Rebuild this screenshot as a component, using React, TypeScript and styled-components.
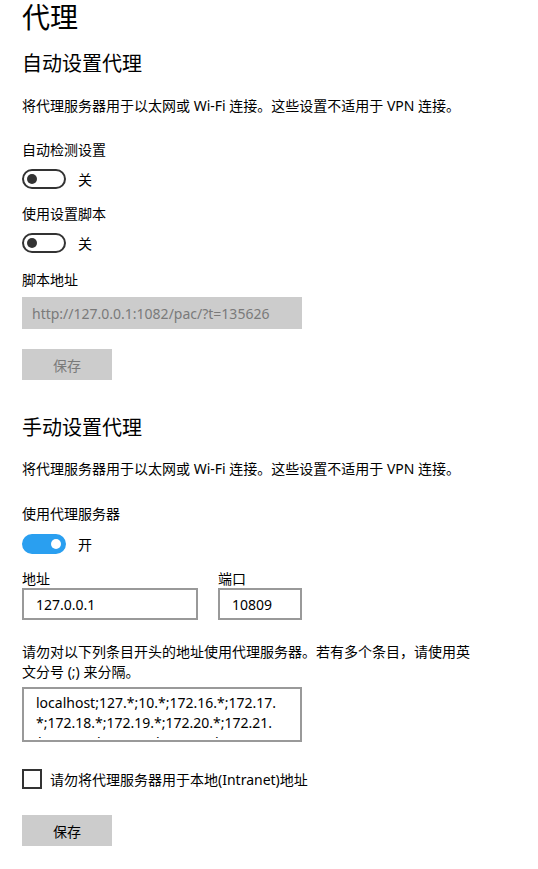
import React from 'react';
import styled, { createGlobalStyle } from 'styled-components';

const GlobalStyle = createGlobalStyle`
  html, body {
    margin: 0;
    padding: 0;
    background: #ffffff;
  }
  body {
    font-family: "Noto Sans", "Noto Sans CJK SC", sans-serif;
    color: #000000;
    font-size: 14px;
  }
`;

const Page = styled.div`
  width: 538px;
  height: 869px;
  box-sizing: border-box;
  padding: 0 22px;
  overflow: hidden;
`;

const Title = styled.h1`
  margin: 0;
  font-size: 28px;
  line-height: 34px;
  font-weight: 400;
`;

const SectionTitle = styled.h2<{ $mt: number }>`
  margin: ${(p) => p.$mt}px 0 0;
  font-size: 20px;
  line-height: 28px;
  font-weight: 400;
`;

const Text = styled.p<{ $mt: number; $maxWidth?: number }>`
  margin: ${(p) => p.$mt}px 0 0;
  font-size: 14px;
  line-height: 20px;
  max-width: ${(p) => (p.$maxWidth ? `${p.$maxWidth}px` : 'none')};
`;

const ToggleRow = styled.div<{ $mt: number }>`
  margin-top: ${(p) => p.$mt}px;
  display: flex;
  align-items: center;
  gap: 12px;
  height: 20px;
  font-size: 14px;
`;

const Track = styled.span<{ $on: boolean }>`
  box-sizing: border-box;
  width: 44px;
  height: 20px;
  border-radius: 10px;
  display: flex;
  align-items: center;
  justify-content: ${(p) => (p.$on ? 'flex-end' : 'flex-start')};
  padding: 0 3px;
  background: ${(p) => (p.$on ? '#2a9ff0' : 'transparent')};
  border: 2px solid ${(p) => (p.$on ? '#2a9ff0' : '#333333')};
`;

const Knob = styled.span<{ $on: boolean }>`
  width: 10px;
  height: 10px;
  border-radius: 50%;
  background: ${(p) => (p.$on ? '#ffffff' : '#333333')};
`;

const Toggle: React.FC<{ on: boolean; mt: number }> = ({ on, mt }) => (
  <ToggleRow $mt={mt}>
    <Track $on={on}>
      <Knob $on={on} />
    </Track>
    <span>{on ? '开' : '关'}</span>
  </ToggleRow>
);

const Input = styled.div<{ $mt?: number; $width: number; $disabled?: boolean }>`
  margin-top: ${(p) => p.$mt ?? 0}px;
  box-sizing: border-box;
  width: ${(p) => p.$width}px;
  height: 32px;
  display: flex;
  align-items: center;
  padding: 0 ${(p) => (p.$disabled ? 10 : 12)}px;
  font-size: 14px;
  background: ${(p) => (p.$disabled ? '#cccccc' : '#ffffff')};
  color: ${(p) => (p.$disabled ? '#7a7a7a' : '#000000')};
  border: ${(p) => (p.$disabled ? 'none' : '2px solid #999999')};
  white-space: nowrap;
`;

const Button = styled.div<{ $mt: number; $disabled?: boolean }>`
  margin-top: ${(p) => p.$mt}px;
  width: 90px;
  height: 31px;
  display: flex;
  align-items: center;
  justify-content: center;
  background: #cccccc;
  color: ${(p) => (p.$disabled ? '#7a7a7a' : '#000000')};
  font-size: 14px;
`;

const FieldGrid = styled.div<{ $mt: number }>`
  margin-top: ${(p) => p.$mt}px;
  display: flex;
  gap: 20px;
`;

const Field = styled.div`
  display: flex;
  flex-direction: column;
`;

const FieldLabel = styled.label`
  font-size: 14px;
  line-height: 18px;
`;

const ExceptionBox = styled.div<{ $mt: number }>`
  margin-top: ${(p) => p.$mt}px;
  box-sizing: border-box;
  width: 280px;
  height: 55px;
  border: 2px solid #999999;
  padding: 4px 12px 0;
  font-size: 14px;
  line-height: 20px;
`;

const ExceptionText = styled.div`
  height: 45px;
  overflow: hidden;
`;

const ExceptionLine = styled.div`
  white-space: nowrap;
`;

const CheckRow = styled.label<{ $mt: number }>`
  margin-top: ${(p) => p.$mt}px;
  display: flex;
  align-items: center;
  gap: 8px;
  height: 20px;
  font-size: 14px;
`;

const CheckBox = styled.span`
  box-sizing: border-box;
  width: 20px;
  height: 20px;
  border: 2px solid #333333;
`;

const exceptionLines = [
  'localhost;127.*;10.*;172.16.*;172.17.',
  '*;172.18.*;172.19.*;172.20.*;172.21.',
  '*;172.22.*;172.23.*;172.24.*;172.25.',
];

const App: React.FC = () => {
  return (
    <>
      <GlobalStyle />
      <Page>
        <Title>代理</Title>

        <SectionTitle $mt={16}>自动设置代理</SectionTitle>
        <Text $mt={18}>将代理服务器用于以太网或 Wi-Fi 连接。这些设置不适用于 VPN 连接。</Text>

        <Text $mt={24}>自动检测设置</Text>
        <Toggle on={false} mt={9} />

        <Text $mt={15}>使用设置脚本</Text>
        <Toggle on={false} mt={9} />

        <Text $mt={17}>脚本地址</Text>
        <Input $mt={7} $width={280} $disabled>
          http://127.0.0.1:1082/pac/?t=135626
        </Input>
        <Button $mt={20} $disabled>
          保存
        </Button>

        <SectionTitle $mt={34}>手动设置代理</SectionTitle>
        <Text $mt={17}>将代理服务器用于以太网或 Wi-Fi 连接。这些设置不适用于 VPN 连接。</Text>

        <Text $mt={25}>使用代理服务器</Text>
        <Toggle on={true} mt={10} />

        <FieldGrid $mt={16}>
          <Field>
            <FieldLabel>地址</FieldLabel>
            <Input $width={176}>127.0.0.1</Input>
          </Field>
          <Field>
            <FieldLabel>端口</FieldLabel>
            <Input $width={84}>10809</Input>
          </Field>
        </FieldGrid>

        <Text $mt={22} $maxWidth={456}>
          请勿对以下列条目开头的地址使用代理服务器。若有多个条目，请使用英文分号 (;) 来分隔。
        </Text>
        <ExceptionBox $mt={5}>
          <ExceptionText>
            {exceptionLines.map((line) => (
              <ExceptionLine key={line}>{line}</ExceptionLine>
            ))}
          </ExceptionText>
        </ExceptionBox>

        <CheckRow $mt={27}>
          <CheckBox />
          <span>请勿将代理服务器用于本地(Intranet)地址</span>
        </CheckRow>

        <Button $mt={26}>保存</Button>
      </Page>
    </>
  );
};

export default App;
